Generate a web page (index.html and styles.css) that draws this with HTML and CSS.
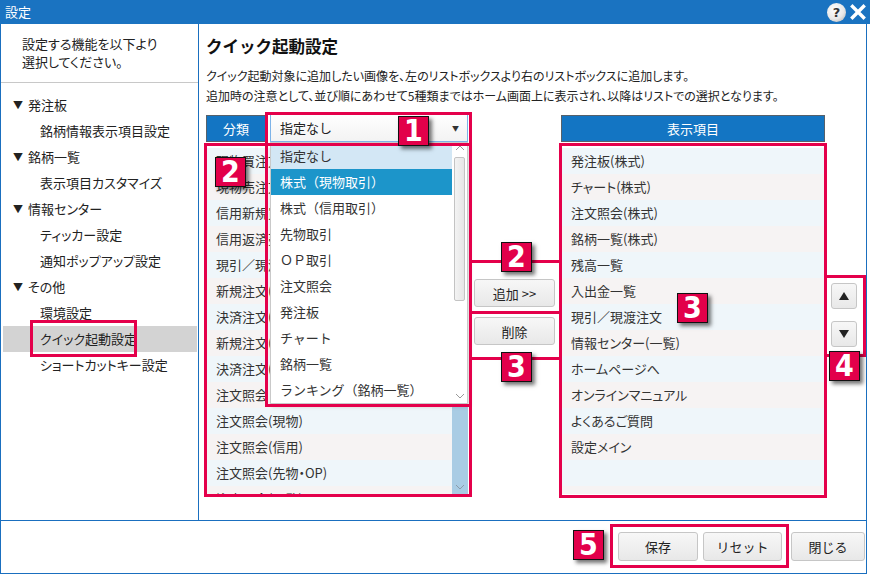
FILE: index.html
```html
<!DOCTYPE html>
<html lang="ja">
<head>
<meta charset="utf-8">
<title>設定</title>
<link rel="stylesheet" href="styles.css">
</head>
<body>
<div class="window">
  <div class="titlebar">
    <span class="title">設定</span>
    <div class="tb-icons">
      <span class="help">?</span>
      <svg class="close" width="16" height="16" viewBox="0 0 16 16"><path d="M2.5 2.5 L13.5 13.5 M13.5 2.5 L2.5 13.5" stroke="#fff" stroke-width="3.4" stroke-linecap="square"/></svg>
    </div>
  </div>
  <div class="frame">
    <div class="content">
      <aside class="sidebar">
        <p class="intro">設定する機能を以下より<br>選択してください。</p>
        <ul class="tree">
          <li class="group"><span class="tri">▼</span>発注板</li>
          <li class="leaf">銘柄情報表示項目設定</li>
          <li class="group"><span class="tri">▼</span>銘柄一覧</li>
          <li class="leaf">表示項目カスタマイズ</li>
          <li class="group"><span class="tri">▼</span>情報センター</li>
          <li class="leaf">ティッカー設定</li>
          <li class="leaf">通知ポップアップ設定</li>
          <li class="group"><span class="tri">▼</span>その他</li>
          <li class="leaf">環境設定</li>
          <li class="leaf selected">クイック起動設定</li>
          <li class="leaf">ショートカットキー設定</li>
        </ul>
      </aside>
      <main class="main">
        <h1 class="heading">クイック起動設定</h1>
        <p class="desc">クイック起動対象に追加したい画像を、左のリストボックスより右のリストボックスに追加します。<br>追加時の注意として、並び順にあわせて5種類まではホーム画面上に表示され、以降はリストでの選択となります。</p>
        <div class="panes">
          <div class="col-left">
            <div class="lhead">
              <div class="hlabel small">分類</div>
              <div class="combo"><span>指定なし</span><span class="caret">▼</span></div>
            </div>
            <div class="list left-list">
              <div class="rows">
                <div class="row">現物買注文</div>
                <div class="row">現物売注文</div>
                <div class="row">信用新規買注文</div>
                <div class="row">信用返済売注文</div>
                <div class="row">現引／現渡注文</div>
                <div class="row">新規注文(先物)</div>
                <div class="row">決済注文(先物)</div>
                <div class="row">新規注文(OP)</div>
                <div class="row">決済注文(OP)</div>
                <div class="row">注文照会</div>
                <div class="row">注文照会(現物)</div>
                <div class="row">注文照会(信用)</div>
                <div class="row">注文照会(先物・OP)</div>
                <div class="row">注文照会(一覧)</div>
              </div>
              <div class="vscroll blue">
                <svg class="arrow-down" width="10" height="6" viewBox="0 0 10 6"><path d="M1 1 L5 5 L9 1" fill="none" stroke="#8a9aa8" stroke-width="1"/></svg>
              </div>
            </div>
            <div class="dropdown">
              <div class="drows">
                <div class="drow hover">指定なし</div>
                <div class="drow sel">株式（現物取引）</div>
                <div class="drow">株式（信用取引）</div>
                <div class="drow">先物取引</div>
                <div class="drow">ＯＰ取引</div>
                <div class="drow">注文照会</div>
                <div class="drow">発注板</div>
                <div class="drow">チャート</div>
                <div class="drow">銘柄一覧</div>
                <div class="drow">ランキング（銘柄一覧）</div>
              </div>
              <div class="vscroll gray">
                <svg width="10" height="6" viewBox="0 0 10 6"><path d="M1 5 L5 1 L9 5" fill="none" stroke="#9a9a9a" stroke-width="1"/></svg>
                <div class="thumb"></div>
                <div class="spacer"></div>
                <svg width="10" height="6" viewBox="0 0 10 6"><path d="M1 1 L5 5 L9 1" fill="none" stroke="#9a9a9a" stroke-width="1"/></svg>
              </div>
            </div>
          </div>
          <div class="col-mid">
            <button class="btn">追加 &gt;&gt;</button>
            <button class="btn">削除</button>
          </div>
          <div class="col-right">
            <div class="hlabel">表示項目</div>
            <div class="list right-list">
              <div class="rows">
                <div class="row">発注板(株式)</div>
                <div class="row">チャート(株式)</div>
                <div class="row">注文照会(株式)</div>
                <div class="row">銘柄一覧(株式)</div>
                <div class="row">残高一覧</div>
                <div class="row">入出金一覧</div>
                <div class="row">現引／現渡注文</div>
                <div class="row">情報センター(一覧)</div>
                <div class="row">ホームページへ</div>
                <div class="row">オンラインマニュアル</div>
                <div class="row">よくあるご質問</div>
                <div class="row">設定メイン</div>
                <div class="row"></div>
                <div class="row"></div>
              </div>
            </div>
          </div>
          <div class="col-ud">
            <button class="btn sq"><svg width="10" height="8" viewBox="0 0 10 8"><path d="M5 0 L10 8 L0 8 Z" fill="#222"/></svg></button>
            <button class="btn sq"><svg width="10" height="8" viewBox="0 0 10 8"><path d="M0 0 L10 0 L5 8 Z" fill="#222"/></svg></button>
          </div>
        </div>
      </main>
    </div>
    <div class="footer">
      <button class="btn fbtn w80">保存</button>
      <button class="btn fbtn w79">リセット</button>
      <button class="btn fbtn w74">閉じる</button>
    </div>
  </div>

  <div class="mark f-side"></div>
  <div class="mark f-left"></div>
  <div class="mark f-drop"></div>
  <div class="mark f-right"></div>
  <div class="mark f-ud"></div>
  <div class="mark f-foot"></div>
  <div class="mark line l1"></div>
  <div class="mark line l2"></div>
  <div class="mark line l3"></div>

  <div class="badge b1">1</div>
  <div class="badge b2a">2</div>
  <div class="badge b2b">2</div>
  <div class="badge b3a">3</div>
  <div class="badge b3b">3</div>
  <div class="badge b4">4</div>
  <div class="badge b5">5</div>
</div>
</body>
</html>
```
FILE: styles.css
```css
* { box-sizing: border-box; }
html, body { margin: 0; padding: 0; background: #fff; }
body {
  font-family: "Noto Sans CJK JP", "Noto Sans", sans-serif;
  font-size: 13px;
  color: #222;
  width: 870px;
  height: 574px;
  overflow: hidden;
}
.window { position: relative; width: 870px; height: 574px; }

.titlebar {
  height: 24px;
  background: #1a73c1;
  color: #fff;
  display: flex;
  align-items: center;
  justify-content: space-between;
  padding: 0 4px 0 5px;
}
.titlebar .title { font-size: 13px; line-height: 24px; }
.tb-icons { display: flex; align-items: center; gap: 4px; }
.help {
  width: 19px; height: 19px; border-radius: 50%;
  background: radial-gradient(circle at 40% 35%, #ffffff 0%, #e8e8e8 55%, #a9a9a9 100%);
  color: #333; font-family: "DejaVu Sans", sans-serif; font-weight: bold; font-size: 13px;
  display: flex; align-items: center; justify-content: center; line-height: 1;
}
.close { display: block; }

.frame {
  width: 867px;
  border-left: 1px solid #1a6fbf;
  border-right: 1px solid #1a6fbf;
  border-bottom: 1px solid #1a6fbf;
}
.content { height: 496px; display: flex; }
.sidebar { width: 198px; border-right: 1px solid #1a6fbf; flex: none; }
.intro {
  margin: 0; padding: 11px 0 0 21px; height: 59px;
  line-height: 18px; font-size: 13px; color: #222;
  border-bottom: 1px solid #c8c8c8;
  font-feature-settings: "palt";
}
.tree { list-style: none; margin: 0; padding: 9px 0 0 0; }
.tree li { height: 26px; line-height: 26px; font-size: 13px; font-feature-settings: "palt"; }
.tree .group { padding-left: 12px; }
.tree .tri { font-size: 10px; display: inline-block; width: 15px; vertical-align: 1px; }
.tree .leaf { padding-left: 39px; }
.tree .leaf.selected { background: #d3d3d3; margin: 0 1px 0 2px; padding-left: 37px; }

.main { flex: 1; padding-left: 7px; }
.heading {
  margin: 10px 0 0 0; font-size: 16.5px; line-height: 24px; font-weight: bold; color: #111;
}
.desc {
  margin: 8px 0 0 0; font-size: 12px; line-height: 20px; color: #222;
  font-feature-settings: "palt";
}
.panes {
  margin-top: 9px;
  display: grid;
  grid-template-columns: 262px 81px 264px 26px;
  column-gap: 6px;
  position: relative;
}
.hlabel {
  height: 27px; background: #1375c3; color: #fff;
  border: 1px solid #56616b;
  display: flex; align-items: center; justify-content: center;
  font-size: 13px;
}
.hlabel.small { width: 60px; flex: none; }
.lhead { display: flex; height: 27px; }
.combo {
  margin-left: 4px; margin-top: -2px; height: 29px; flex: 1;
  border: 1px solid #7db3e8; background: linear-gradient(#ffffff, #f3f3f3);
  display: flex; align-items: center; justify-content: space-between;
  padding: 0 8px 0 9px; font-size: 13px; position: relative; z-index: 2;
}
.combo .caret { font-size: 7px; color: #333; }

.list {
  margin-top: 4px; height: 348px; padding-top: 2px; overflow: hidden;
  display: flex; background: #fff;
}
.left-list { margin-left: 1px; }
.right-list { margin: 4px 1px 0 1px; }
.rows { flex: 1; }
.row {
  height: 26px; line-height: 26px; padding-left: 9px; font-size: 13px; color: #333;
  background: #eff6fa; white-space: nowrap; overflow: hidden;
  font-feature-settings: "palt";
}
.row:nth-child(even) { background: #f6f3f3; }
.vscroll { width: 16px; flex: none; display: flex; flex-direction: column; align-items: center; }
.vscroll.blue { background: #a9cce4; justify-content: flex-end; padding-bottom: 4px; margin-top: -2px; }

.dropdown {
  position: absolute; left: 64px; top: 27px; width: 198px; height: 262px;
  background: #fff; border: 1px solid #c9c9c9; display: flex; z-index: 3;
  box-shadow: 2px 3px 4px rgba(0,0,0,0.15);
}
.drows { flex: 1; }
.drow { height: 26px; line-height: 26px; padding-left: 9px; font-size: 13px; color: #333; white-space: nowrap; }
.drow.hover { background: #d3e7f5; }
.drow.sel { background: #1c95ca; color: #fff; }
.vscroll.gray { width: 15px; padding: 2px 0 4px; background: #fff; }
.vscroll.gray .thumb {
  margin-top: 6px; width: 11px; height: 144px; border: 1px solid #c3c3c3; border-radius: 2px;
  background: linear-gradient(90deg, #f3f3f3, #e6e6e6);
}
.vscroll.gray .spacer { flex: 1; }

.btn {
  font-family: "Noto Sans CJK JP", "Noto Sans", sans-serif;
  font-size: 13px; color: #222;
  border: 1px solid #c6c6c6; border-radius: 3px;
  background: linear-gradient(#f7f7f7, #e8e8e8);
  padding: 0; height: 28px; cursor: default;
}
.col-mid { display: flex; flex-direction: column; gap: 10px; padding-top: 164px; }
.col-ud { display: flex; flex-direction: column; gap: 12px; padding-top: 168px; }
.btn.sq { width: 26px; height: 26px; display: flex; align-items: center; justify-content: center; }

.footer {
  height: 53px; border-top: 1px solid #1a6fbf;
  display: flex; justify-content: flex-end; align-items: flex-start;
  padding: 11px 1px 0 0; gap: 5px;
}
.fbtn { height: 29px; }
.w80 { width: 80px; }
.w79 { width: 79px; }
.w74 { width: 74px; margin-left: 4px; }

/* annotation overlays */
.mark { position: absolute; border: 3px solid #e4004b; z-index: 5; }
.f-side { left: 30px; top: 320px; width: 107px; height: 37px; }
.f-left { left: 204px; top: 143px; width: 268px; height: 354px; }
.f-drop { left: 265px; top: 112px; width: 207px; height: 295px; }
.f-right { left: 559px; top: 143px; width: 268px; height: 355px; }
.f-ud { left: 824px; top: 275px; width: 42px; height: 82px; }
.f-foot { left: 610px; top: 524px; width: 179px; height: 44px; }
.line { border: none; height: 3px; background: #e4004b; left: 471px; width: 89px; }
.l1 { top: 260px; }
.l2 { top: 311px; }
.l3 { top: 357px; }

.badge {
  position: absolute; z-index: 6;
  width: 31px; height: 30px;
  background: #e2004a; border: 1px solid #111;
  color: #fff; font-family: "Liberation Sans Narrow", "DejaVu Sans Condensed", sans-serif;
  font-weight: bold; font-size: 30px; line-height: 28px; text-align: center;
  box-shadow: 3px 3px 4px rgba(0,0,0,0.55);
}
.b1 { left: 398px; top: 116px; }
.b2a { left: 215px; top: 157px; }
.b2b { left: 501px; top: 242px; }
.b3a { left: 501px; top: 352px; }
.b3b { left: 677px; top: 293px; }
.b4 { left: 829px; top: 351px; }
.b5 { left: 573px; top: 530px; }
```
